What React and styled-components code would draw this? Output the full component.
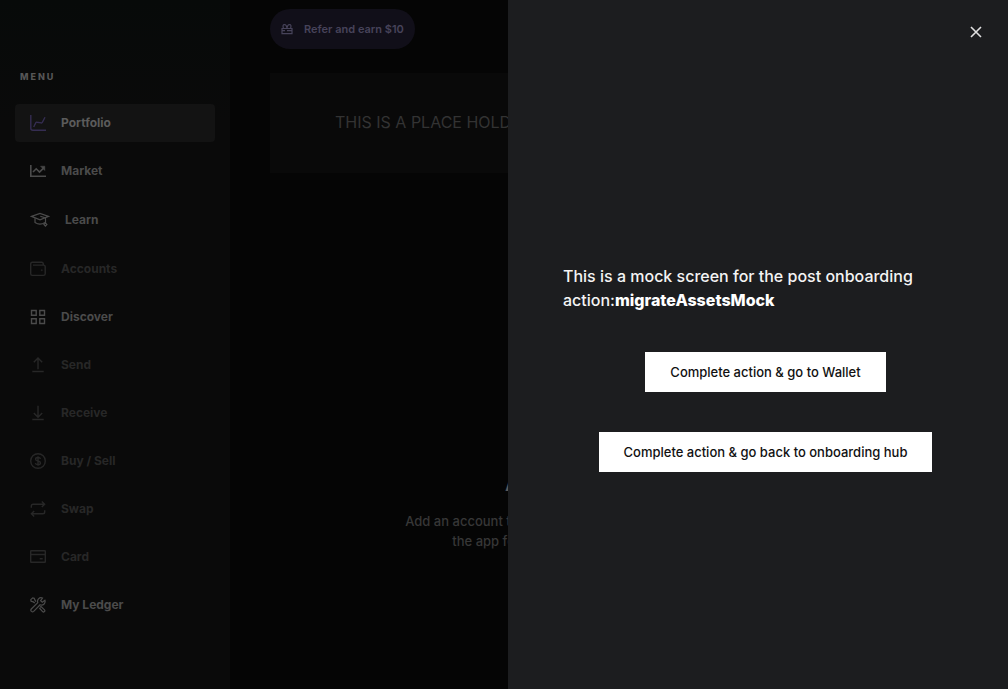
import React from "react";
import styled, { createGlobalStyle } from "styled-components";

const GlobalStyle = createGlobalStyle`
  *, *::before, *::after { box-sizing: border-box; }
  body {
    margin: 0;
    background: #050505;
    color: #5b5b5b;
    font-family: Inter, "Liberation Sans", sans-serif;
    font-size: 13px;
  }
  button { font: inherit; border: 0; cursor: pointer; }
`;

const Page = styled.div`
  display: flex;
  min-height: 100vh;
  overflow: hidden;
`;

const Sidebar = styled.aside`
  flex: 0 0 230px;
  padding: 70px 15px 24px;
  background: linear-gradient(#070a09, #0a0a0a 120px);
`;

const MenuTitle = styled.h2`
  margin: 0 0 20px;
  padding-left: 5px;
  font-size: 9px;
  line-height: 14px;
  font-weight: 800;
  letter-spacing: 2px;
  color: #565656;
`;

const MenuList = styled.ul`
  display: flex;
  flex-direction: column;
  gap: 10px;
  margin: 0;
  padding: 0;
  list-style: none;
`;

const toneColors = { active: "#5b5b5b", normal: "#4b4b4b", disabled: "#272727" };

const MenuItem = styled.button`
  display: flex;
  align-items: center;
  gap: 15px;
  width: 100%;
  height: ${(p) => (p.$tall ? 40 : 38)}px;
  padding: 0 15px;
  border-radius: 4px;
  font-size: 12px;
  line-height: 16px;
  font-weight: 700;
  text-align: left;
  color: ${(p) => toneColors[p.$tone]};
  background: ${(p) => (p.$tone === "active" ? "#131313" : "transparent")};

  svg { color: ${(p) => (p.$tone === "active" ? "#352d52" : "inherit")}; }
`;

const Icon = styled.svg`
  flex: none;
  fill: none;
  stroke: currentColor;
`;

const Main = styled.main`
  flex: 1;
  min-width: 0;
  padding: 9px 40px 40px;
`;

const ReferButton = styled.button`
  display: flex;
  align-items: center;
  gap: 11px;
  height: 40px;
  padding: 0 11px;
  border-radius: 20px;
  font-size: 11px;
  line-height: 14px;
  font-weight: 600;
  color: #47435a;
  background: #110f19;
`;

const Banner = styled.section`
  height: 100px;
  margin-top: 24px;
  padding: 39px 65px;
  overflow: hidden;
  background: #090909;
  color: #333333;
  font-size: 16px;
  line-height: 20px;
  white-space: nowrap;
`;

const EmptyState = styled.section`
  display: flex;
  flex-direction: column;
  align-items: center;
  margin-top: 300px;
  text-align: center;
`;

const EmptyTitle = styled.h1`
  margin: 0 0 16px;
  font-size: 20px;
  line-height: 22px;
  font-weight: 700;
  color: #5b5b5b;
`;

const EmptyText = styled.p`
  max-width: 460px;
  margin: 0;
  font-size: 13px;
  line-height: 20px;
  font-weight: 500;
  color: #373737;
`;

const Drawer = styled.aside`
  position: fixed;
  top: 0;
  right: 0;
  bottom: 0;
  display: flex;
  flex-direction: column;
  width: 500px;
  max-width: 100%;
  background: #1c1d1f;
  color: #ffffff;
`;

const DrawerHeader = styled.header`
  display: flex;
  justify-content: flex-end;
  padding: 22px;
`;

const CloseButton = styled.button`
  display: flex;
  align-items: center;
  justify-content: center;
  width: 20px;
  height: 20px;
  padding: 0;
  background: none;
  color: #e0e0e0;
`;

const DrawerBody = styled.div`
  flex: 1;
  display: flex;
  flex-direction: column;
  align-items: center;
  justify-content: center;
  gap: 40px;
  padding: 0 40px 18px 55px;
`;

const Message = styled.p`
  width: 100%;
  margin: 0;
  font-size: 16px;
  line-height: 24px;
  font-weight: 500;
  color: #f4f4f4;

  strong { font-weight: 800; color: #ffffff; }
`;

const ActionButton = styled.button`
  height: 40px;
  padding: 0 25px;
  font-size: 13px;
  line-height: 16px;
  font-weight: 500;
  color: #111111;
  background: #ffffff;
`;

const icons = {
  portfolio: (
    <>
      <path d="M.8 0v13.2q0 2 2 2H16" />
      <path d="M3.7 12l2.1-4.2q.4-.8 1.3-.6l4 .7q.9.2 1.3-.6L15 2.2" />
    </>
  ),
  market: (
    <>
      <path d="M.8 2v11.2H16" strokeWidth="1.6" />
      <path d="M3 9l3.2-3.2 3.3 3.3 4-4" strokeWidth="1.6" />
      <path d="M10.5 3.2h4.3v4.3z" fill="currentColor" strokeWidth=".5" />
    </>
  ),
  learn: (
    <>
      <path d="M1.5 6.4L10 3.4l8.5 3-8.5 3.4z" />
      <path d="M5 8.2v4.2q5 3.4 10 0M10.3 6.3l5.2 1.6v5" />
      <path d="M15.4 13l1.5 1.6-1.5 1.6-1.5-1.6z" />
    </>
  ),
  accounts: (
    <>
      <path d="M13.3 4.1V2.9q0-1.7-1.7-1.7H2.3Q.7 1.2.7 2.9v9.8q0 1.7 1.6 1.7h11.2q1.7 0 1.7-1.7V5.8q0-1.7-1.7-1.7H3" />
      <circle cx="11.8" cy="9.2" r=".7" fill="currentColor" strokeWidth=".4" />
    </>
  ),
  discover: (
    <path d="M1.5 1.5h4.7v4.7H1.5zM9.8 1.5h4.7v4.7H9.8zM1.5 9.8h4.7v4.7H1.5zM9.8 9.8h4.7v4.7H9.8z" />
  ),
  send: <path d="M8 12.2V1.3M3.8 5.3L8 1.1l4.2 4.2M2.3 14.5h11.4" />,
  receive: <path d="M8 .8v11.4M3.8 8L8 12.2 12.2 8M2.3 14.5h11.4" />,
  buy: (
    <>
      <circle cx="8" cy="8" r="7.3" />
      <path d="M10.6 5.9Q10.2 4.5 8 4.5 5.6 4.5 5.6 6.2 5.6 7.5 8 8q2.5.5 2.5 1.9 0 1.7-2.5 1.7-2.3 0-2.7-1.5M8 3.2v9.6" />
    </>
  ),
  swap: (
    <>
      <path d="M1.3 6.8V5q0-1.8 1.8-1.8h11.4M11.8.5l2.8 2.7L11.8 6" />
      <path d="M14.7 9.2V11q0 1.8-1.8 1.8H1.5M4.2 10l-2.8 2.8 2.8 2.7" />
    </>
  ),
  card: (
    <path d="M1.3 1.7h13.4q.6 0 .6.6v10.4q0 .6-.6.6H1.3q-.6 0-.6-.6V2.3q0-.6.6-.6zM.7 5.5h14.6M9.7 9.7h3" />
  ),
  tools: (
    <>
      <path d="M14.9 3.3l-2.6 2-1.7-1.6 1.9-2.7Q10.2.1 8.5 1.8 7 3.4 7.8 5.6L1.3 12q-1 1.2.1 2.4 1.2 1 2.3 0l6.4-6.6q2.3.9 4-.8 1.5-1.6.8-3.7z" />
      <path d="M4.8 6L3.3 4.9 1.1 4.2.8 2.6 2.7.8l1.5.4.8 2 1 1.4M10 10.3l1-.7 3.5 3.2q.8 1-.1 1.8-.9.8-1.8 0L9.4 11" />
    </>
  ),
  gift: (
    <>
      <path d="M1 5.5h10v5.2H1zM1 7.7h3M6 7.7h5" />
      <path d="M2.4 5.3Q1.3 1.5 3.5 1.5 5.4 1.6 6 5 6.6 1.6 8.5 1.5q2.2 0 1.1 3.8" />
    </>
  ),
  close: <path d="M1 1l10 10M11 1L1 11" />,
};

function Glyph({ name, size = 16, weight = 1.4 }) {
  return (
    <Icon width={size} height={size} viewBox={`0 0 ${size} ${size}`} strokeWidth={weight} aria-hidden="true">
      {icons[name]}
    </Icon>
  );
}

const menu = [
  { label: "Portfolio", icon: "portfolio", tone: "active" },
  { label: "Market", icon: "market", tone: "normal" },
  { label: "Learn", icon: "learn", tone: "normal", large: true },
  { label: "Accounts", icon: "accounts", tone: "disabled" },
  { label: "Discover", icon: "discover", tone: "normal" },
  { label: "Send", icon: "send", tone: "disabled" },
  { label: "Receive", icon: "receive", tone: "disabled" },
  { label: "Buy / Sell", icon: "buy", tone: "disabled" },
  { label: "Swap", icon: "swap", tone: "disabled" },
  { label: "Card", icon: "card", tone: "disabled" },
  { label: "My Ledger", icon: "tools", tone: "normal" },
];

export default function App() {
  return (
    <>
      <GlobalStyle />
      <Page>
        <Sidebar>
          <MenuTitle>MENU</MenuTitle>
          <nav>
            <MenuList>
              {menu.map(({ label, icon, tone, large }) => (
                <li key={label}>
                  <MenuItem type="button" $tone={tone} $tall={large} aria-disabled={tone === "disabled"}>
                    <Glyph name={icon} size={large ? 20 : 16} weight={large || icon === "tools" ? 1.2 : 1.4} />
                    {label}
                  </MenuItem>
                </li>
              ))}
            </MenuList>
          </nav>
        </Sidebar>
        <Main>
          <ReferButton type="button">
            <Glyph name="gift" size={12} weight={1.2} />
            Refer and earn $10
          </ReferButton>
          <Banner>THIS IS A PLACE HOLDER</Banner>
          <EmptyState>
            <EmptyTitle>Add an account to start</EmptyTitle>
            <EmptyText>
              Add an account to start managing your crypto assets. You must have
              <br />
              the app for your crypto asset installed on your Ledger
            </EmptyText>
          </EmptyState>
        </Main>
      </Page>
      <Drawer role="dialog" aria-label="Post onboarding action">
        <DrawerHeader>
          <CloseButton type="button" aria-label="Close">
            <Glyph name="close" size={12} weight={1.6} />
          </CloseButton>
        </DrawerHeader>
        <DrawerBody>
          <Message>
            This is a mock screen for the post onboarding action:
            <strong>migrateAssetsMock</strong>
          </Message>
          <ActionButton type="button">Complete action &amp; go to Wallet</ActionButton>
          <ActionButton type="button">Complete action &amp; go back to onboarding hub</ActionButton>
        </DrawerBody>
      </Drawer>
    </>
  );
}
